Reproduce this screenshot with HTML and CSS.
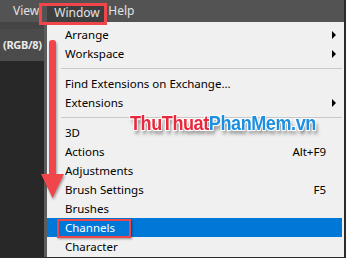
FILE: index.html
```html
<!doctype html>
<html>
<head>
  <link rel="stylesheet" href="styles.css">
</head>
<body>
  <div class="app">
    <div class="menubar">
      <span class="top-item">View</span>
      <span class="top-item open">Window</span>
      <span class="top-item">Help</span>
    </div>
    <div class="main">
      <div class="side">
        <div class="side-strip"></div>
        <div class="doc-tab">(RGB/8)</div>
      </div>
      <div class="gutter"></div>
      <div class="menu">
        <div class="item sub">Arrange</div>
        <div class="item sub">Workspace</div>
        <div class="sep"></div>
        <div class="item">Find Extensions on Exchange...</div>
        <div class="item sub">Extensions</div>
        <div class="sep"></div>
        <div class="item">3D</div>
        <div class="item">Actions<span class="key">Alt+F9</span></div>
        <div class="item">Adjustments</div>
        <div class="item">Brush Settings<span class="key">F5</span></div>
        <div class="item">Brushes</div>
        <div class="item active">Channels</div>
        <div class="item">Character</div>
      </div>
    </div>

    <!-- annotations -->
    <div class="mark mark-window"></div>
    <div class="mark mark-channels"></div>
    <svg class="arrow" width="30" height="160" viewBox="0 0 30 160">
      <rect x="8" y="0" width="7" height="140" rx="3" fill="#f0454b"/>
      <polygon points="0,134 23,134 11.5,158" fill="#f0454b"/>
    </svg>
    <div class="watermark"><span class="wm-red">ThuThuat</span><span class="wm-blue">PhanMem.vn</span></div>
  </div>
</body>
</html>
```

FILE: styles.css
```css
body{
  margin: 0;
  background: #2a2a2a;
  font-family: "Noto Sans", "Liberation Sans", sans-serif;
}
.app{
  position: relative;
  width: 344px;
  height: 257px;
  border-right: 2px solid #2b2b2b;
  border-bottom: 1px solid #2b2b2b;
  overflow: hidden;
  display: flex;
  flex-direction: column;
}
.menubar{
  height: 22px;
  background: #535353;
  display: flex;
  align-items: center;
  padding-left: 13px;
}
.top-item{
  color: #e2e2e2;
  font-size: 12px;
  height: 18px;
  line-height: 18px;
}
.top-item.open{
  background: #3e3e3e;
  width: 44px;
  padding: 0 7px;
  margin: 4px 3px 0 8px;
  text-align: center;
}
.main{
  flex: 1;
  display: flex;
}
.side{
  width: 44px;
  background: #282828;
}
.side-strip{
  height: 7px;
  background: #454545;
}
.doc-tab{
  height: 32px;
  background: #4b4b4b;
  color: #ececec;
  font-size: 11px;
  font-weight: bold;
  letter-spacing: -0.3px;
  line-height: 32px;
  padding-left: 3px;
  white-space: nowrap;
  overflow: hidden;
}
.gutter{
  width: 3px;
  background: #5c5c5c;
}
.menu{
  flex: 1;
  background: #f0f0f0;
  padding: 3px 2px 0 0;
}
.item{
  position: relative;
  height: 19px;
  line-height: 19px;
  padding-left: 18px;
  font-size: 11.5px;
  color: #000;
}
.item.active{
  background: #0078d7;
  color: #fff;
}
.key{
  position: absolute;
  right: 16px;
}
.sub::after{
  content: "";
  position: absolute;
  right: 6px;
  top: 6px;
  border-left: 4px solid #000;
  border-top: 4px solid transparent;
  border-bottom: 4px solid transparent;
}
.sep{
  height: 11px;
  display: flex;
  align-items: center;
  padding-left: 14px;
}
.sep::before{
  content: "";
  flex: 1;
  height: 1px;
  background: #c8c8c8;
}
.mark{
  position: absolute;
  border: 3px solid #f0454b;
}
.mark-window{
  left: 39px;
  top: 3px;
  width: 62px;
  height: 16px;
}
.mark-channels{
  left: 57px;
  top: 219px;
  width: 70px;
  height: 15px;
  border-width: 2px;
  box-shadow: 1px 1px 2px rgba(0,0,0,0.4);
}
.arrow{
  position: absolute;
  left: 41px;
  top: 40px;
  filter: drop-shadow(1px 2px 1px rgba(0,0,0,0.35));
}
.watermark{
  position: absolute;
  left: 130px;
  top: 111px;
  font-family: "Liberation Sans", sans-serif;
  font-size: 21px;
  font-weight: bold;
  letter-spacing: -0.5px;
  white-space: nowrap;
  transform: scaleX(0.86);
  transform-origin: left center;
  text-shadow: 1px 1px 0 #fff, -1px -1px 0 #fff, 1px -1px 0 #fff, -1px 1px 0 #fff, 2px 4px 4px rgba(0,0,0,0.5);
}
.wm-red{
  color: #e8283c;
}
.wm-blue{
  color: #1d8fe1;
}
```
